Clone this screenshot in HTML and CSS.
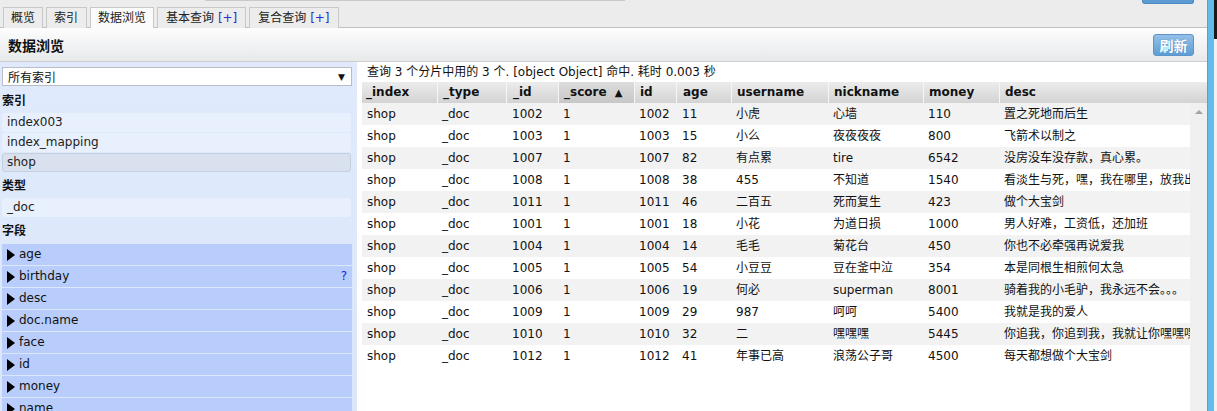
FILE: index.html
```html
<!DOCTYPE html>
<html lang="zh-CN">
<head>
<meta charset="utf-8">
<title>数据浏览</title>
<link rel="stylesheet" href="styles.css">
</head>
<body>
<div class="page">
  <div class="main">
    <div class="topbar">
      <div class="tabs">
        <div class="tab">概览</div>
        <div class="tab">索引</div>
        <div class="tab active">数据浏览</div>
        <div class="tab">基本查询 <span class="plus">[+]</span></div>
        <div class="tab">复合查询 <span class="plus">[+]</span></div>
      </div>
      <div class="cutbtn"></div>
    </div>
    <div class="header">
      <h1 class="title">数据浏览</h1>
      <button class="refresh">刷新</button>
    </div>
    <div class="content">
      <aside class="sidebar">
        <div class="select"><span>所有索引</span><span class="arrow">▼</span></div>
        <div class="label first">索引</div>
        <div class="item">index003</div>
        <div class="item">index_mapping</div>
        <div class="item selected">shop</div>
        <div class="label">类型</div>
        <div class="item">_doc</div>
        <div class="label">字段</div>
        <div class="fields">
          <div class="field"><span class="tri"></span>age</div>
          <div class="field"><span class="tri"></span>birthday<span class="q">?</span></div>
          <div class="field"><span class="tri"></span>desc</div>
          <div class="field"><span class="tri"></span>doc.name</div>
          <div class="field"><span class="tri"></span>face</div>
          <div class="field"><span class="tri"></span>id</div>
          <div class="field"><span class="tri"></span>money</div>
          <div class="field"><span class="tri"></span>name</div>
        </div>
      </aside>
      <section class="results">
        <div class="info">查询 3 个分片中用的 3 个. [object Object] 命中. 耗时 0.003 秒</div>
        <div class="thead row">
          <div>_index</div><div>_type</div><div>_id</div><div class="sorted">_score <span class="up">▲</span></div><div>id</div><div>age</div><div>username</div><div>nickname</div><div>money</div><div>desc</div>
        </div>
        <div class="bodywrap">
          <div class="tbody">
            <div class="row"><div>shop</div><div>_doc</div><div>1002</div><div>1</div><div>1002</div><div>11</div><div>小虎</div><div>心墙</div><div>110</div><div>置之死地而后生</div></div>
            <div class="row"><div>shop</div><div>_doc</div><div>1003</div><div>1</div><div>1003</div><div>15</div><div>小么</div><div>夜夜夜夜</div><div>800</div><div>飞箭术以制之</div></div>
            <div class="row"><div>shop</div><div>_doc</div><div>1007</div><div>1</div><div>1007</div><div>82</div><div>有点累</div><div>tire</div><div>6542</div><div>没房没车没存款，真心累。</div></div>
            <div class="row"><div>shop</div><div>_doc</div><div>1008</div><div>1</div><div>1008</div><div>38</div><div>455</div><div>不知道</div><div>1540</div><div>看淡生与死，嘿，我在哪里，放我出去</div></div>
            <div class="row"><div>shop</div><div>_doc</div><div>1011</div><div>1</div><div>1011</div><div>46</div><div>二百五</div><div>死而复生</div><div>423</div><div>做个大宝剑</div></div>
            <div class="row"><div>shop</div><div>_doc</div><div>1001</div><div>1</div><div>1001</div><div>18</div><div>小花</div><div>为道日损</div><div>1000</div><div>男人好难，工资低，还加班</div></div>
            <div class="row"><div>shop</div><div>_doc</div><div>1004</div><div>1</div><div>1004</div><div>14</div><div>毛毛</div><div>菊花台</div><div>450</div><div>你也不必牵强再说爱我</div></div>
            <div class="row"><div>shop</div><div>_doc</div><div>1005</div><div>1</div><div>1005</div><div>54</div><div>小豆豆</div><div>豆在釜中泣</div><div>354</div><div>本是同根生相煎何太急</div></div>
            <div class="row"><div>shop</div><div>_doc</div><div>1006</div><div>1</div><div>1006</div><div>19</div><div>何必</div><div>superman</div><div>8001</div><div>骑着我的小毛驴，我永远不会。。。</div></div>
            <div class="row"><div>shop</div><div>_doc</div><div>1009</div><div>1</div><div>1009</div><div>29</div><div>987</div><div>呵呵</div><div>5400</div><div>我就是我的爱人</div></div>
            <div class="row"><div>shop</div><div>_doc</div><div>1010</div><div>1</div><div>1010</div><div>32</div><div>二</div><div>嘿嘿嘿</div><div>5445</div><div>你追我，你追到我，我就让你嘿嘿嘿</div></div>
            <div class="row"><div>shop</div><div>_doc</div><div>1012</div><div>1</div><div>1012</div><div>41</div><div>年事已高</div><div>浪荡公子哥</div><div>4500</div><div>每天都想做个大宝剑</div></div>
          </div>
          <div class="vscroll"><span class="sarrow"></span></div>
        </div>
      </section>
    </div>
  </div>
  <div class="edge"><div class="bluebar"></div><div class="strip"></div></div>
</div>
</body>
</html>
```
FILE: styles.css
```css
* { box-sizing: border-box; }
html, body { margin: 0; padding: 0; }
body {
  width: 1217px;
  height: 411px;
  overflow: hidden;
  background: #fff;
  font-family: "DejaVu Sans", "Noto Sans CJK SC", sans-serif;
  font-size: 12px;
  color: #111;
}
.page { display: flex; height: 411px; }
.main { width: 1207px; display: flex; flex-direction: column; }

.topbar {
  height: 28px;
  display: flex;
  align-items: flex-start;
  justify-content: space-between;
  border-bottom: 1px solid #c2c2c2;
  background: linear-gradient(#c9c9c9, #c9c9c9) 205px 0 / 420px 1px no-repeat, #ececec;
}
.tabs { display: flex; align-self: flex-end; padding-left: 3px; margin-bottom: -1px; }
.tab {
  height: 21px;
  line-height: 21px;
  padding: 0 7px;
  margin-right: 3px;
  border: 1px solid #c8c8c8;
  border-bottom: none;
  background: #ececec;
  color: #222;
  white-space: nowrap;
}
.tab:nth-child(2) { padding: 0 8px 0 7px; }
.tab:nth-child(4), .tab:nth-child(5) { padding: 0 8px; }
.tab.active { background: #fbfbfb; }
.plus { color: #2b2bd8; }
.cutbtn {
  width: 52px; height: 4px; margin-right: 13px;
  background: #5c9bd4;
  border: 1px solid #4d88c0; border-top: none;
  border-radius: 0 0 3px 3px;
}

.header {
  height: 34px;
  display: flex;
  align-items: center;
  justify-content: space-between;
  padding: 0 13px 0 8px;
  border-bottom: 1px solid #cdcdcd;
  background: linear-gradient(#fdfdfd, #e7e9eb);
}
.title { margin: 0; font-size: 14px; font-weight: bold; color: #111; }
.refresh {
  width: 41px; height: 22px; padding: 0;
  border: 1px solid #5f93c9;
  border-radius: 3px;
  background: linear-gradient(#93c0e8, #5d9dd6);
  color: #fff;
  font-family: "DejaVu Sans", "Noto Sans CJK SC", sans-serif;
  font-size: 14px; font-weight: bold;
  text-shadow: 0 0 1px #3c77b0;
}

.content { flex: 1; display: flex; min-height: 0; }
.sidebar {
  width: 357px;
  padding: 5px 5px 0 2px;
  background: linear-gradient(#e0eafc, #dbe6fb);
  overflow: hidden;
}
.select {
  height: 19px;
  display: flex; align-items: center; justify-content: space-between;
  padding: 0 6px 0 5px;
  background: #fff;
  border: 1px solid #b9bec6;
  color: #111;
}
.arrow { font-size: 9px; }
.label { font-weight: bold; line-height: 16px; margin: 6px 0 4px 0; color: #111; }
.label.first { margin-top: 7px; }
.item {
  height: 19px; line-height: 19px;
  margin: 0 1px 1px 0;
  padding-left: 5px;
  border-radius: 3px;
  background: #e8f0fd;
  color: #222;
}
.item.selected {
  background: #d8e1ed;
  border: 1px solid #c5d0de;
  line-height: 17px;
  padding-left: 4px;
}
.fields { margin-top: 5px; width: 350px; }
.field {
  height: 21px; line-height: 21px;
  margin-bottom: 1px;
  display: flex; align-items: center;
  padding-left: 5px;
  background: #b8cdfb;
  color: #111;
}
.tri {
  width: 0; height: 0;
  border-top: 6px solid transparent;
  border-bottom: 6px solid transparent;
  border-left: 8px solid #000;
  margin-right: 4px;
}
.q { margin-left: auto; margin-right: 5px; color: #2323e0; }

.results { flex: 1; display: flex; flex-direction: column; padding-left: 5px; min-width: 0; }
.info { height: 20px; line-height: 20px; padding-left: 5px; white-space: nowrap; color: #111; }
.row {
  display: grid;
  grid-template-columns: 75px 69px 52px 76px 42px 55px 97px 95px 76px 1fr;
  height: 22px;
  line-height: 22px;
}
.row > div { padding-left: 5px; white-space: nowrap; overflow: hidden; }
.row > div:nth-child(3), .row > div:nth-child(6) { padding-left: 6px; }
.thead {
  height: 21px; line-height: 21px;
  font-weight: bold;
  color: #111;
}
.thead > div {
  background: linear-gradient(#ececec, #d3d3d3);
  border-left: 1px solid #f6f6f6;
}
.thead > div:first-child { border-left: none; padding-left: 4px; }
.thead > div.sorted { background: linear-gradient(#dcdcdc, #c7c7c7); }
.up { font-size: 10px; margin-left: 4px; }
.bodywrap { flex: 1; display: flex; min-height: 0; }
.tbody { flex: 1; overflow: hidden; }
.tbody .row:nth-child(odd) { background: #f2f2f2; }
.tbody .row { color: #111; }
.vscroll { width: 17px; background: #f0f0f0; display: flex; justify-content: center; }
.sarrow {
  margin-top: 7px;
  width: 0; height: 0;
  border-left: 4px solid transparent;
  border-right: 4px solid transparent;
  border-bottom: 4px solid #a3a3a3;
}

.edge { width: 10px; display: flex; }
.bluebar { width: 7px; background: #62bbec; border-left: 1px solid #4ea4d8; }
.strip { width: 3px; background: linear-gradient(#1a1a1a 0, #1a1a1a 39px, #f0f0f0 39px); }
```
